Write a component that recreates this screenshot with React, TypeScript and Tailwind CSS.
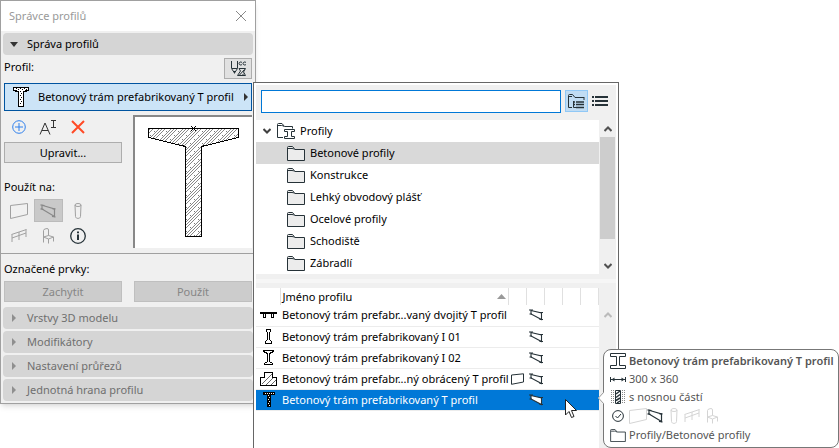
import React from "react";

type SvgProps = { className?: string };

function BeamIcon() {
  return (
    <svg className="h-[14px] w-4" viewBox="0 0 16 14" fill="none" stroke="currentColor" strokeWidth="1.2">
      <path d="M2 1.2L14.5 5V12.5L2 5" />
      <path d="M2 1.2V5M0.5 0.8L4.500 1.5M0.5 4.8L3.500 5.3M12.500 4.8H15.500M12 12.300L15.500 13" />
    </svg>
  );
}

function SmallBeamIcon({ fill = "none" }: { fill?: string }) {
  return (
    <svg className="h-3 w-[14px]" viewBox="0 0 14 12" fill="none" stroke="currentColor" strokeWidth="1.1">
      <path d="M2 1.500L12.500 4V10.500L2 5Z" fill={fill} />
      <path d="M0 1H4M0.500 5H3M11 3.500H14M10.500 10.500H14" />
    </svg>
  );
}

function WallIcon({ className = "h-4 w-[18px]" }: SvgProps) {
  return (
    <svg className={className} viewBox="0 0 18 16" fill="none" stroke="currentColor">
      <path d="M0.5 2.5L17.5 0.5V11.5L0.5 15.5Z" />
    </svg>
  );
}

function SmallWallIcon() {
  return (
    <svg className="h-3 w-[13px]" viewBox="0 0 13 12" fill="none" stroke="currentColor">
      <path d="M0.5 2L12.5 0.8V9L0.5 11.3Z" />
    </svg>
  );
}

function ColumnIcon() {
  return (
    <svg className="h-4 w-2" viewBox="0 0 8 16" fill="none" stroke="currentColor">
      <ellipse cx="4" cy="2" rx="3" ry="1.5" />
      <path d="M1 2L1.5 13.5C1.5 16 6.5 16 6.5 13.500L7 2" />
    </svg>
  );
}

function RailingIcon() {
  return (
    <svg className="h-[14px] w-4" viewBox="0 0 16 14" fill="none" stroke="currentColor">
      <path d="M0.5 5.5L15.5 0.5M1 9L15 4M1 5.500V13M8 3V11M15 0.500V8" />
    </svg>
  );
}

function ChairIcon() {
  return (
    <svg className="h-4 w-3" viewBox="0 0 12 16" fill="none" stroke="currentColor">
      <path d="M1.5 14.500V2.500Q1.500 1.500 3 1L5 0.500Q6.500 0.500 6.500 2V7.500L1.500 9M6.500 7.500L11.500 9L6.500 11L1.500 9M6.500 11v4.500M11.500 9v4.500" />
    </svg>
  );
}

function FolderIcon({ className = "h-[15px] w-[18px]", fill = "#ececec" }: { className?: string; fill?: string }) {
  return (
    <svg className={className} viewBox="0 0 18 15" fill="none" stroke="#263238">
      <path d="M0.5 14.5V1.5Q0.500 0.5 1.5 0.5H5.5L8 3.5H17.5V14.5Z" fill={fill} />
      <path d="M1 2.5H5Q6.500 2.5 7.500 3.500" />
    </svg>
  );
}

function ProfileFolderIcon() {
  return (
    <svg className="h-[17px] w-[19px]" viewBox="0 0 19 17" fill="none" stroke="#263238">
      <path d="M6 14.500H0.5V1.5Q0.500 0.5 1.5 0.500H5L7.5 3.5H15.500V5.500" />
      <path d="M1 2.5H4.500Q6 2.5 7 3.500" />
      <path d="M7.500 6.500H17.500V8.500H14.500V13.500H17.500V15.500H7.500V13.500H10.500V8.500H7.500Z" fill="#fff" />
    </svg>
  );
}

function SteelIcon() {
  return (
    <svg className="h-4 w-4 shrink-0" viewBox="0 0 16 16" fill="#fff" stroke="#263238">
      <path d="M0.5 0.5H15.5V3.500H9.500V12.500H15.5V15.500H0.500V12.500H6.500V3.500H0.500Z" />
    </svg>
  );
}

function TProfile() {
  return (
    <svg className="h-5 w-4 shrink-0" viewBox="0 0 16 20" shapeRendering="crispEdges">
      <path d="M0 0H16V4H14V5H11V20H5V5H2V4H0Z" fill="#000" />
      <path d="M1 1H15V3H12V4H10V19H6V4H4V3H1Z" fill="#fff" />
      <path d="M3 1h1v1h-1zM5 2h1v1h-1zM7 1h1v1h-1zM9 2h1v1h-1zM11 1h1v1h-1zM13 2h1v1h-1zM7 4h1v1h-1zM8 6h1v1h-1zM7 8h1v1h-1zM8 10h1v1h-1zM7 12h1v1h-1zM8 14h1v1h-1zM7 16h1v1h-1z" fill="#000" />
    </svg>
  );
}

function DoubleTProfile() {
  return (
    <svg className="h-[7px] w-[17px]" viewBox="0 0 17 7" shapeRendering="crispEdges">
      <path d="M0 0H17V2H14V3H13V6H12V3H11V2H6V3H5V6H4V3H3V2H0Z" fill="#000" />
      <path d="M3 2H6V6H3ZM11 2H14V6H11Z" fill="#000" />
      <path d="M4 2H5V5H4ZM12 2H13V5H12Z" fill="#fff" />
    </svg>
  );
}

function I01Profile() {
  return (
    <svg className="h-[15px] w-[7px]" viewBox="0 0 7 15" fill="#fff" stroke="#000" shapeRendering="crispEdges">
      <path d="M1.5 0.5H5.5V2.5L4.5 3.5V10.5L6.5 12.5V14.5H0.5V12.5L2.5 10.5V3.500L1.500 2.500Z" />
    </svg>
  );
}

function I02Profile() {
  return (
    <svg className="h-[15px] w-[11px]" viewBox="0 0 11 15" fill="#fff" stroke="#000" shapeRendering="crispEdges">
      <path d="M0.5 0.5H10.500V1.500L6.500 3.500V11.500L9.500 13.500V14.500H1.500V13.500L4.500 11.500V3.500L0.500 1.500Z" />
    </svg>
  );
}

function InvertedTProfile() {
  return (
    <svg className="h-[14px] w-[17px]" viewBox="0 0 17 14" fill="#fff" stroke="#000" shapeRendering="crispEdges">
      <path d="M0.5 13.500V5.500H4.500V0.5H12.500V5.500H16.500V13.500Z" />
      <path d="M2 12L12 2M6 13L13 6M11 13L16 8" stroke="#666" />
    </svg>
  );
}

function TableTProfile() {
  return (
    <svg className="h-[15px] w-[12px]" viewBox="0 0 12 15" shapeRendering="crispEdges">
      <path d="M0 0H12V3H8V15H4V3H0Z" fill="#000" />
      <path d="M2 1h1v1h-1zM4 1h1v1h-1zM6 1h1v1h-1zM8 1h1v1h-1zM10 1h1v1h-1zM5 3h1v1h-1zM6 5h1v1h-1zM5 7h1v1h-1zM6 9h1v1h-1zM5 11h1v1h-1zM6 13h1v1h-1z" fill="#fff" />
    </svg>
  );
}

function Triangle({ className }: { className: string }) {
  return (
    <svg className={`h-2 w-1 shrink-0 ${className}`} viewBox="0 0 4 8" fill="currentColor">
      <path d="M0 0L4 4L0 8Z" />
    </svg>
  );
}

function Chevron({ up = false, className = "" }: { up?: boolean; className?: string }) {
  return (
    <svg className={`h-[6px] w-2 ${className}`} viewBox="0 0 8 6" fill="none" stroke="currentColor" strokeWidth="2">
      <path d={up ? "M0.5 5L4 1.5L7.5 5" : "M0.5 1L4 4.5L7.5 1"} />
    </svg>
  );
}

function Section({ title }: { title: string }) {
  return (
    <button className="flex h-[22px] w-full items-center gap-[11px] rounded-sm bg-[#d5d5d5] pl-[9px] text-[#6f6f6f]">
      <Triangle className="text-[#8f8f8f]" />
      {title}
    </button>
  );
}

function Manager() {
  return (
    <section className="w-64 border border-[#a0a0a0] bg-[#f0f0f0] shadow-md">
      <header className="flex h-[30px] items-center justify-between bg-white px-2 text-[#999]">
        <h1>Správce profilů</h1>
        <button aria-label="Zavřít">
          <svg className="h-3 w-3" viewBox="0 0 12 12" stroke="#888"><path d="M1 1L11 11M11 1L1 11" /></svg>
        </button>
      </header>
      <div className="px-[2px] pt-[2px]">
        <button className="flex h-[22px] w-full items-center gap-[9px] rounded-sm bg-[#d5d5d5] pl-[7px]">
          <svg className="h-[5px] w-2" viewBox="0 0 8 5" fill="#333"><path d="M0 0H8L4 5Z" /></svg>
          Správa profilů
        </button>
      </div>
      <div className="flex justify-between px-[3px] pt-[3px]">
        <span className="pt-px">Profil:</span>
        <button aria-label="Zobrazit řez" className="flex h-[21px] w-7 items-center justify-center border border-[#adadad] bg-[#e1e1e1]">
          <svg className="h-[17px] w-[18px]" viewBox="0 0 18 17" fill="none" stroke="#263238">
            <path d="M2.5 1V8.5L5.5 13L8.5 8.500V1M3 8.500H8M5.500 11V13.500" />
            <path d="M13 2.500C12 1.500 10 2 10 3.500S12 5.500 13 4.500M17 2.500C16 1.500 14 2 14 3.500S16 5.500 17 4.500" />
            <path d="M10 8.500H16.500L14.500 12L16.500 15.500H8.500L11.500 11ZM10.500 15L15.500 9.500M13.500 15L15 13.500" />
          </svg>
        </button>
      </div>
      <div className="px-[3px] pt-1">
        <button className="flex h-7 w-full items-center border border-[#0054a0] bg-[#cce4f7] pr-[3px] pl-2">
          <TProfile />
          <span className="flex-1 pl-[9px] text-left whitespace-nowrap">Betonový trám prefabrikovaný T profil</span>
          <Triangle className="text-[#333]" />
        </button>
      </div>
      <div className="flex justify-between border-b border-[#a0a0a0] px-[3px] pt-1 pb-[5px]">
        <div className="flex w-[118px] flex-col">
          <div className="grid h-[27px] grid-cols-4 items-center justify-items-center pb-1">
            <button aria-label="Nový">
              <svg className="h-[14px] w-[14px]" viewBox="0 0 14 14" fill="none" stroke="#2f80ed"><circle cx="7" cy="7" r="6.3" /><path d="M7 3v8M3 7h8" /></svg>
            </button>
            <button aria-label="Přejmenovat">
              <svg className="h-4 w-[18px]" viewBox="0 0 18 16" fill="none" stroke="#333"><path d="M1 15.500L6 4L11 15.500M3 11.500H9M12 1.500H17M14.500 1.500V8.500M12 8.500H17" /></svg>
            </button>
            <button aria-label="Smazat">
              <svg className="h-[14px] w-[14px]" viewBox="0 0 14 14" stroke="#ff4a26" strokeWidth="2"><path d="M1 1L13 13M13 1L1 13" /></svg>
            </button>
          </div>
          <button className="h-[21px] border border-[#adadad] bg-[#e1e1e1]">Upravit...</button>
          <span className="mt-4">Použít na:</span>
          <div className="mt-1 grid grid-cols-4 text-[#a0a0a0]">
            <button aria-label="Stěna" className="flex h-[23px] items-center justify-center"><WallIcon /></button>
            <button aria-label="Trám" className="flex h-[23px] items-center justify-center border border-[#bbb] bg-[#c9c9c9] text-[#888]"><BeamIcon /></button>
            <button aria-label="Sloup" className="flex h-[23px] items-center justify-center"><ColumnIcon /></button>
          </div>
          <div className="mt-[2px] grid grid-cols-4 text-[#a0a0a0]">
            <button aria-label="Zábradlí" className="flex h-6 items-center justify-center"><RailingIcon /></button>
            <button aria-label="Objekt" className="flex h-6 items-center justify-center"><ChairIcon /></button>
            <button aria-label="Informace" className="flex h-6 items-center justify-center">
              <svg className="h-4 w-4" viewBox="0 0 16 16" fill="none" stroke="#263238"><circle cx="8" cy="8" r="7.3" strokeWidth="1.300" /><path d="M8 6.500V12M8 3.500V5.300" strokeWidth="2" /></svg>
            </button>
          </div>
        </div>
        <div className="h-[133px] w-[119px] border-t-2 border-l-2 border-[#888] bg-white">
          <svg className="h-[131px] w-[117px]" viewBox="135 117 117 131" shapeRendering="crispEdges">
            <defs>
              <pattern id="hatch" width="12" height="12" patternUnits="userSpaceOnUse">
                <path d="M0 12L12 0M0 3L3 0M3 12L12 3M0 6L6 0M6 12L12 6" stroke="#888" />
                <path d="M2 7h1v1h-1zM6 3h1v1h-1zM10 11h1v1h-1z" fill="#777" />
              </pattern>
            </defs>
            <path d="M148.5 128.5H238.5V137.5L201.5 146.500V236.500H185.500V146.500L148.500 137.500Z" fill="url(#hatch)" stroke="#000" />
            <path d="M191 126L196 131M196 126L191 131" stroke="#000" />
          </svg>
        </div>
      </div>
      <div className="px-[3px] pt-[7px]">
        <span className="block">Označené prvky:</span>
        <div className="mt-1 grid grid-cols-2 gap-3 text-[#868686]">
          <button disabled className="h-[21px] border border-[#bfbfbf] bg-[#ccc]">Zachytit</button>
          <button disabled className="h-[21px] border border-[#bfbfbf] bg-[#ccc]">Použít</button>
        </div>
      </div>
      <div className="flex flex-col gap-[2px] px-[2px] pt-[5px] pb-[2px]">
        {["Vrstvy 3D modelu", "Modifikátory", "Nastavení průřezů", "Jednotná hrana profilu"].map((t) => (
          <Section key={t} title={t} />
        ))}
      </div>
    </section>
  );
}

const folders = ["Betonové profily", "Konstrukce", "Lehký obvodový plášť", "Ocelové profily", "Schodiště", "Zábradlí"];

const profiles = [
  { name: "Betonový trám prefabr...vaný dvojitý T profil", icon: <DoubleTProfile /> },
  { name: "Betonový trám prefabrikovaný I 01", icon: <I01Profile /> },
  { name: "Betonový trám prefabrikovaný I 02", icon: <I02Profile /> },
  { name: "Betonový trám prefabr...ný obrácený T profil", icon: <InvertedTProfile />, wall: true },
  { name: "Betonový trám prefabrikovaný T profil", icon: <TableTProfile />, selected: true },
];

function ProfilePicker() {
  return (
    <section className="absolute top-[82px] bottom-0 left-[253px] flex w-[366px] flex-col border border-b-0 border-[#666] bg-white px-[2px] pt-[2px]">
      <div className="flex h-[35px] shrink-0 items-start bg-[#f0f0f0] px-[5px] pt-[5px]">
        <input aria-label="Hledat profil" className="h-[23px] min-w-0 flex-1 border border-[#0078d7] bg-white px-1 outline-none" />
        <button aria-label="Stromové zobrazení" className="ml-1 flex h-[22px] w-[23px] items-center justify-center border border-[#90c8f6] bg-[#c0dcf3]">
          <svg className="h-[15px] w-[17px]" viewBox="0 0 17 15" fill="none" stroke="#263238">
            <path d="M4 13.500H0.500V1.5Q0.500 0.5 1.5 0.5H4.500L7 3.500H16M1 2.500H4M16 3V6M5.500 7V13.500H8" />
            <path d="M5 8H7M8 8H16M5 10.500H7M8 10.500H16M8 13.500H16" strokeWidth="1.6" />
          </svg>
        </button>
        <button aria-label="Seznam" className="flex h-[22px] w-[23px] items-center justify-center">
          <svg className="h-[11px] w-4" viewBox="0 0 16 11" fill="#263238"><path d="M0 0h2v2h-2zM3 0h13v2h-13zM0 4h2v2h-2zM3 4h13v2h-13zM0 8h2v2h-2zM3 8h13v2h-13z" /></svg>
        </button>
      </div>
      <div className="flex shrink-0">
        <ul className="flex-1 bg-white">
          <li className="flex h-[22px] items-center pl-[7px]">
            <Chevron className="mr-[6px] text-[#404040]" />
            <ProfileFolderIcon />
            <span className="pl-1">Profily</span>
          </li>
          {folders.map((f, i) => (
            <li key={f} className={`flex h-[22px] items-center gap-[5px] pl-[31px] ${i === 0 ? "bg-[#d9d9d9]" : ""}`}>
              <FolderIcon />
              {f}
            </li>
          ))}
        </ul>
        <div className="flex w-[17px] flex-col items-center bg-[#f0f0f0] text-[#505050]">
          <div className="flex h-[17px] items-center"><Chevron up /></div>
          <div className="h-[102px] w-[15px] bg-[#cdcdcd]" />
          <div className="mt-auto flex h-[17px] items-center"><Chevron /></div>
        </div>
      </div>
      <div className="h-[14px] shrink-0 border-y-[5px] border-[#f0f0f0] bg-[#f6f6f6]" />
      <div className="flex min-h-0 flex-1">
        <div className="flex-1">
          <table className="w-full table-fixed border-collapse">
            <colgroup>
              <col className="w-6" />
              <col />
              <col className="w-[18px]" />
              <col className="w-[18px]" />
              <col className="w-[18px]" />
              <col className="w-[18px]" />
              <col className="w-[18px]" />
            </colgroup>
            <thead>
              <tr className="h-[17px]">
                <th aria-label="Náhled" className="border-r border-[#e0e0e0] p-0" />
                <th className="border-r border-[#e0e0e0] px-[2px] py-0 font-normal">
                  <div className="flex items-center justify-between">
                    Jméno profilu
                    <svg className="h-[5px] w-[9px]" viewBox="0 0 9 5" fill="#999"><path d="M0 5L4.500 0L9 5Z" /></svg>
                  </div>
                </th>
                {["Stěna", "Trám", "Sloup", "Zábradlí", "Objekt"].map((c) => (
                  <th key={c} aria-label={c} className="border-r border-[#e0e0e0] p-0" />
                ))}
              </tr>
            </thead>
            <tbody>
              {profiles.map((p) => (
                <tr key={p.name} className={`h-[21px] border-b border-[#ececec] ${p.selected ? "bg-[#0078d7] text-white" : ""}`}>
                  <td className="p-0 pl-px"><div className="flex justify-center">{p.icon}</div></td>
                  <td className="p-0 pl-[2px] whitespace-nowrap">{p.name}</td>
                  <td className="p-0">
                    <div className="flex justify-center text-[#263238]">{p.wall && <SmallWallIcon />}</div>
                  </td>
                  <td className="p-0">
                    <div className="flex justify-center text-[#263238]">
                      <SmallBeamIcon fill={p.selected ? "#fff" : "none"} />
                    </div>
                  </td>
                  <td className="p-0" />
                  <td className="p-0" />
                  <td className="p-0" />
                </tr>
              ))}
            </tbody>
          </table>
        </div>
        <div className="flex w-[17px] justify-center bg-[#f0f0f0] pt-6 text-[#bbb]"><Chevron up /></div>
      </div>
    </section>
  );
}

function InfoTag() {
  return (
    <aside className="absolute top-[349px] left-[603px] w-[236px] rounded-lg border border-[#777] bg-white px-[6px] pt-[2px] pb-[3px] text-[#555]">
      <svg className="absolute top-[42px] -left-[6px] h-3 w-[6px]" viewBox="0 0 6 12">
        <path d="M6 0L0 6L6 12Z" fill="#fff" />
        <path d="M6 0L0.500 6L6 12" fill="none" stroke="#999" />
      </svg>
      <div className="flex h-[18px] items-center gap-[3px] font-semibold whitespace-nowrap">
        <SteelIcon />
        Betonový trám prefabrikovaný T profil
      </div>
      <div className="flex h-[18px] items-center gap-[3px]">
        <svg className="h-[7px] w-4" viewBox="0 0 16 7" stroke="#263238" fill="#263238">
          <path d="M0.5 1V6M15.500 1V6M1 3.500H15" />
          <path d="M1.500 3.500L4.500 1.500V5.500ZM14.500 3.500L11.500 1.500V5.500Z" stroke="none" />
        </svg>
        300 x 360
      </div>
      <div className="flex h-[18px] items-center gap-[3px]">
        <svg className="h-[14px] w-4" viewBox="0 0 16 14" stroke="#263238" fill="none">
          <path d="M1.500 0V14M3.500 0V14M12.500 0V14M14.500 0V14" strokeDasharray="1 1" stroke="#888" />
          <path d="M5.500 0.5H10.500V13.500H5.500Z" />
          <path d="M6 4L10 1M6 7.500L10 4.500M6 10.500L10 8M7 13L10 11" strokeWidth="1.500" />
        </svg>
        s nosnou částí
      </div>
      <div className="flex h-5 items-center text-[#d4d4d4]">
        <svg className="mr-[5px] ml-[2px] h-3 w-3" viewBox="0 0 12 12" stroke="#263238" fill="none">
          <circle cx="6" cy="6" r="5.4" /><path d="M3.500 6L5.500 8L9 4" />
        </svg>
        <WallIcon />
        <span className="mr-[7px] text-[#263238]"><BeamIcon /></span>
        <ColumnIcon />
        <span className="mr-[6px] ml-[6px]"><RailingIcon /></span>
        <ChairIcon />
      </div>
      <div className="flex h-[18px] items-center gap-[3px]">
        <FolderIcon className="h-[13px] w-4" fill="#fff" />
        Profily/Betonové profily
      </div>
    </aside>
  );
}

export default function App() {
  return (
    <main className="relative h-screen overflow-hidden bg-white font-['Noto_Sans',sans-serif] text-[11px] leading-4 text-black">
      <Manager />
      <ProfilePicker />
      <InfoTag />
      <svg className="absolute top-[399px] left-[565px] h-5 w-[13px]" viewBox="0 0 13 20" fill="#fff" stroke="#222">
        <path d="M0.5 0.5V16L4 12.5L6.500 18.500L9 17.500L6.500 11.500H11.500Z" />
      </svg>
    </main>
  );
}
